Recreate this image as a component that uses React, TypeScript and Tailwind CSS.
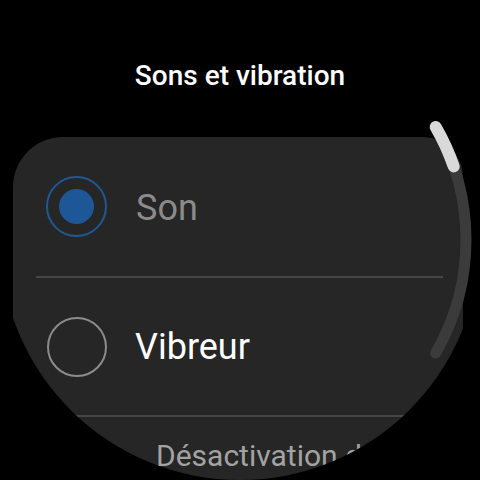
import React from "react";

function Radio({ checked }: { checked: boolean }) {
  if (checked) {
    return (
      <div className="w-[61px] h-[61px] rounded-full border-2 border-[#1e5896] flex items-center justify-center shrink-0">
        <div className="w-[35px] h-[35px] rounded-full bg-[#1d5797]" />
      </div>
    );
  }
  return <div className="w-[60px] h-[60px] rounded-full border-[2.5px] border-[#8c8c8c] shrink-0" />;
}

function ScrollArc() {
  return (
    <svg className="absolute inset-0 pointer-events-none" width="480" height="480" viewBox="0 0 480 480">
      <path d="M 435.7 127 A 226 226 0 0 1 435.7 353" fill="none" stroke="#3b3b3b" strokeWidth="11" strokeLinecap="round" />
      <path d="M 435.7 127 A 226 226 0 0 1 453.7 166.4" fill="none" stroke="#d9d9d9" strokeWidth="12" strokeLinecap="round" />
    </svg>
  );
}

export default function App() {
  return (
    <div className="w-[480px] h-[480px] bg-black font-['Roboto',sans-serif]">
      <div className="relative w-[480px] h-[480px] rounded-full overflow-hidden bg-black">
        <h1 className="pt-[60px] h-[91px] text-center text-white text-[28px] leading-[32px] font-medium">
          Sons et vibration
        </h1>

        <div className="mt-[46px] ml-[13px] w-[450px] h-[400px] bg-[#262626] rounded-tl-[50px] rounded-tr-[40px]">
          {/* Son */}
          <div className="h-[139px] flex items-center pl-[33px] gap-[29px]">
            <Radio checked />
            <span className="text-[36px] leading-none text-[#8b8b8b] pt-[2px]">Son</span>
          </div>
          <div className="ml-[23px] mr-[20px] h-[2px] bg-[#464646]" />

          {/* Vibreur */}
          <div className="h-[137px] flex items-center pl-[34px] gap-[28px]">
            <Radio checked={false} />
            <span className="text-[36px] leading-none text-white">Vibreur</span>
          </div>
          <div className="ml-[23px] mr-[20px] h-[2px] bg-[#464646]" />

          {/* Désactivation */}
          <div className="pl-[143px] pt-[21px] whitespace-nowrap">
            <span className="text-[30px] leading-[35px] text-[#a3a3a3]">Désactivation du son</span>
          </div>
        </div>

        <ScrollArc />
      </div>
    </div>
  );
}
